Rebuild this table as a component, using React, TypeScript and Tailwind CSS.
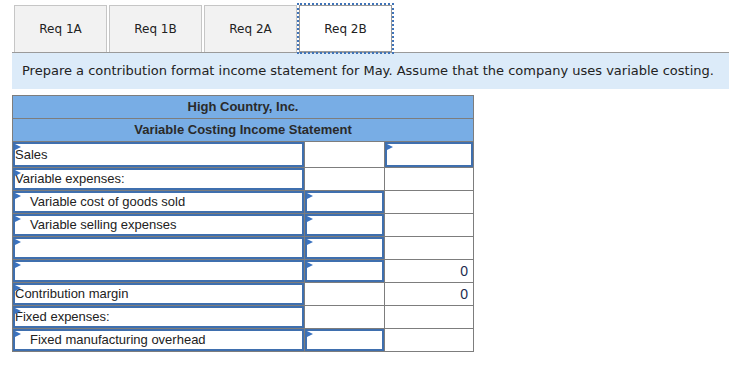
import React from 'react';

type Cell = 'plain' | 'input' | { value: string; topRule?: boolean };

interface Row {
  label: string;
  indent?: boolean;
  height: number;
  mid: Cell;
  end: Cell;
}

const TABS = ['Req 1A', 'Req 1B', 'Req 2A', 'Req 2B'];

const ROWS: Row[] = [
  { label: 'Sales', height: 25, mid: 'plain', end: 'input' },
  { label: 'Variable expenses:', height: 22, mid: 'plain', end: 'plain' },
  { label: 'Variable cost of goods sold', indent: true, height: 22, mid: 'input', end: 'plain' },
  { label: 'Variable selling expenses', indent: true, height: 22, mid: 'input', end: 'plain' },
  { label: '', height: 22, mid: 'input', end: 'plain' },
  { label: '', height: 22, mid: 'input', end: { value: '0' } },
  { label: 'Contribution margin', height: 22, mid: 'plain', end: { value: '0', topRule: true } },
  { label: 'Fixed expenses:', height: 22, mid: 'plain', end: 'plain' },
  { label: 'Fixed manufacturing overhead', indent: true, height: 22, mid: 'input', end: 'plain' },
];

const Marker = () => (
  <svg className="absolute left-0 top-0" width="6" height="7" viewBox="0 0 6 7">
    <path d="M0 0 L6 3 L0 6 Z" fill="#3b73c0" />
  </svg>
);

const InputBox = ({ height, children }: { height: number; children?: React.ReactNode }) => (
  <div className="relative flex items-center border-2 border-[#3f6fae] bg-white" style={{ height }}>
    <Marker />
    {children}
  </div>
);

const ValueCell = ({ cell, height, topRule }: { cell: Cell; height: number; topRule?: boolean }) => {
  if (cell === 'input') {
    return (
      <td className="border border-[#7d7d7d] p-0">
        <InputBox height={height} />
      </td>
    );
  }
  const value = typeof cell === 'object' ? cell.value : '';
  return (
    <td className={`border border-[#7d7d7d] p-0 ${topRule ? 'border-t-black' : ''}`}>
      <div className="flex items-center justify-end pr-[5px] text-[14px] text-[#1d2b4f]" style={{ height }}>
        {value}
      </div>
    </td>
  );
};

export default function App() {
  return (
    <div className="min-h-screen bg-white pl-[12px] pt-[5px] font-['Liberation_Sans',Arial,sans-serif]">
      {/* tab strip */}
      <div className="flex gap-[2px] border-b border-[#9a9a9a] pl-[2px]">
        {TABS.map((tab, i) => {
          const active = i === TABS.length - 1;
          return (
            <div
              key={tab}
              className={`flex h-[47px] w-[93px] items-center justify-center border text-[12px] text-[#222] font-['DejaVu_Sans',Verdana,sans-serif] ${
                active
                  ? 'mb-[-1px] border-[#9a9a9a] bg-white outline-2 outline-dotted outline-[#3f73b8]'
                  : 'border-b-0 border-[#c6c6c6] bg-[#f2f2f2]'
              }`}
            >
              {tab}
            </div>
          );
        })}
      </div>

      {/* instructions */}
      <div className="flex h-[36px] items-center bg-[#dcebf9] pl-[10px] text-[13px] text-[#222] font-['DejaVu_Sans',Verdana,sans-serif]">
        Prepare a contribution format income statement for May. Assume that the company uses variable costing.
      </div>

      {/* statement */}
      <table className="mt-[6px] w-[461px] table-fixed border-collapse text-[13px] text-[#222]">
        <colgroup>
          <col className="w-[292px]" />
          <col className="w-[80px]" />
          <col className="w-[89px]" />
        </colgroup>
        <thead>
          <tr>
            <th colSpan={3} className="h-[23px] border border-[#7d7d7d] bg-[#78ade5] p-0 font-bold text-[#2a2a2a]">
              High Country, Inc.
            </th>
          </tr>
          <tr>
            <th colSpan={3} className="h-[23px] border border-[#7d7d7d] bg-[#78ade5] p-0 font-bold text-[#2a2a2a]">
              Variable Costing Income Statement
            </th>
          </tr>
        </thead>
        <tbody>
          {ROWS.map((row, i) => {
            const topRule = typeof row.end === 'object' && row.end.topRule;
            return (
              <tr key={i}>
                <td className="border border-[#7d7d7d] p-0">
                  <InputBox height={row.height}>
                    <span className={row.indent ? 'pl-[15px]' : 'pl-0'}>{row.label}</span>
                  </InputBox>
                </td>
                <ValueCell cell={row.mid} height={row.height} topRule={topRule} />
                <ValueCell cell={row.end} height={row.height} topRule={topRule} />
              </tr>
            );
          })}
        </tbody>
      </table>
    </div>
  );
}
